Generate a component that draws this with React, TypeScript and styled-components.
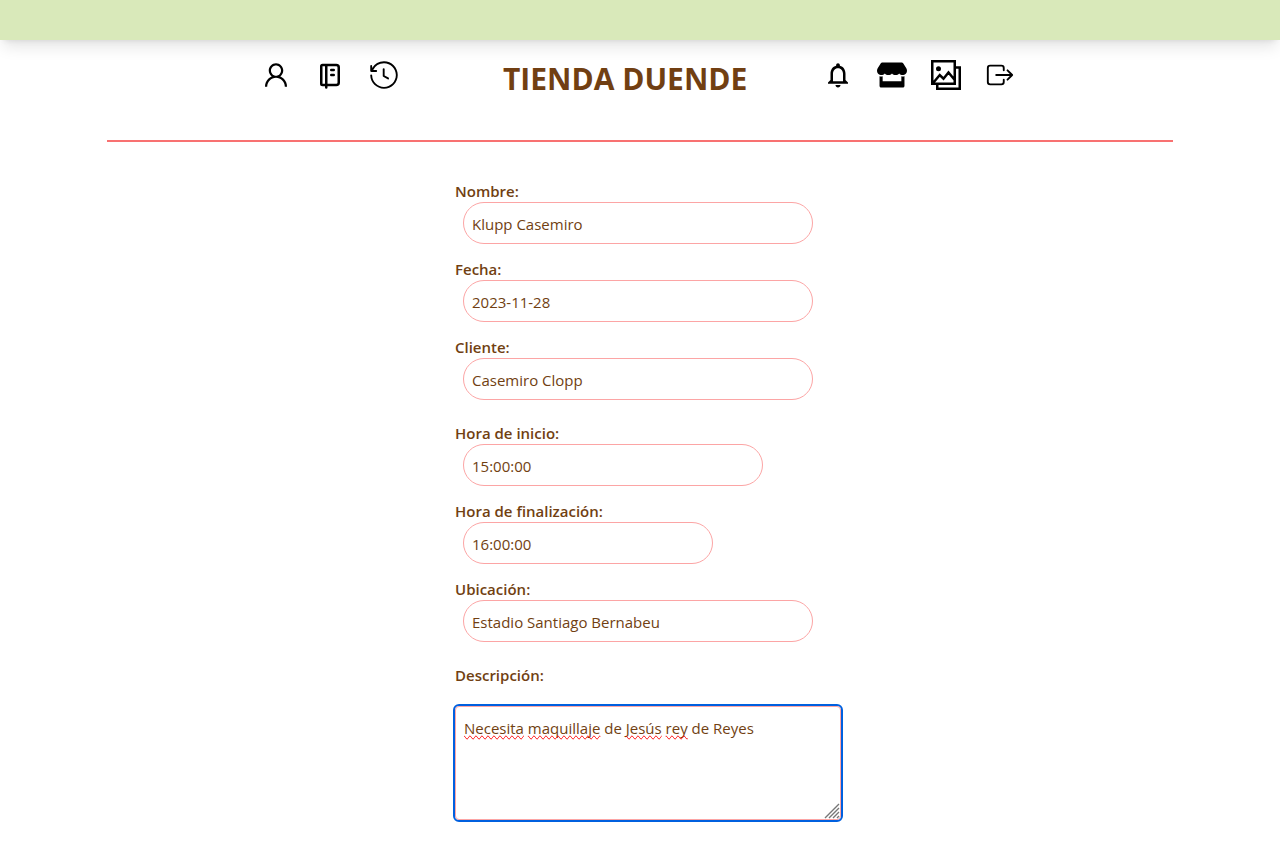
import React from "react";
import styled, { createGlobalStyle } from "styled-components";
import { GoHistory } from "react-icons/go";
import { AiOutlineUser } from "react-icons/ai";
import { TbNotebook } from "react-icons/tb";
import { MdNotificationsNone } from "react-icons/md";
import { FaStore } from "react-icons/fa";
import { GrGallery } from "react-icons/gr";
import { IoExitOutline } from "react-icons/io5";

const GlobalStyle = createGlobalStyle`
  *, *::before, *::after { box-sizing: border-box; }
  body {
    margin: 0;
    background: #ffffff;
    color: #713f12;
    font-family: "Segoe UI", "Open Sans", "Noto Sans", sans-serif;
    font-size: 15px;
    line-height: 24px;
  }
`;

const TopBar = styled.div`
  height: 40px;
  background: #d9e9ba;
  box-shadow: 0 10px 15px -3px rgba(0, 0, 0, 0.1), 0 4px 6px -4px rgba(0, 0, 0, 0.1);
`;

const Header = styled.header`
  display: flex;
  justify-content: center;
  align-items: flex-start;
  width: 83.3333%;
  height: 102px;
  margin: 0 auto;
  padding: 20px 4px 0 0;
  border-bottom: 2px solid #f87171;
`;

const IconGroup = styled.nav`
  display: flex;
  gap: 24px;
`;

const IconButton = styled.button`
  display: block;
  width: 30px;
  height: 30px;
  padding: 0;
  border: 0;
  background: none;
  color: #000000;
  cursor: pointer;

  svg {
    display: block;
    width: 30px;
    height: 30px;
  }
`;

const Title = styled.h1`
  width: 240px;
  margin: 0 80px 0 104px;
  font-size: 30px;
  line-height: 38px;
  font-weight: 700;
  white-space: nowrap;
`;

const Form = styled.form`
  display: flex;
  flex-direction: column;
  gap: 20px;
  width: 370px;
  max-width: 100%;
  margin: 36px auto 20px;
`;

const FieldGroup = styled.div`
  display: flex;
  flex-direction: column;
  gap: 12px;
`;

const Field = styled.div`
  display: flex;
  flex-direction: column;
`;

const Label = styled.label`
  padding-top: 2px;
  font-weight: 600;
  line-height: 22px;
`;

const Input = styled.input<{ $width: number }>`
  width: ${(p) => p.$width}px;
  height: 42px;
  margin: 0 8px;
  padding: 9px 8px 7px;
  border: 1px solid #fca5a5;
  border-radius: 24px;
  background: #ffffff;
  color: inherit;
  font: inherit;
`;

const NoteBox = styled.div`
  position: relative;
  width: 386px;
  margin-top: 20px;
`;

const NoteArea = styled.textarea`
  display: block;
  width: 100%;
  height: 114px;
  padding: 9px 8px 7px;
  border: 1px solid #fca5a5;
  border-radius: 4px;
  outline: 2px solid #0060df;
  background: #ffffff;
  color: inherit;
  font: inherit;
  resize: both;

  &::-webkit-resizer {
    display: none;
  }
`;

const SpellLayer = styled.div`
  position: absolute;
  inset: 0;
  padding: 10px 9px;
  color: transparent;
  pointer-events: none;
`;

const Misspelled = styled.span`
  text-decoration-line: spelling-error;
`;

const Grip = styled.svg`
  position: absolute;
  right: 1px;
  bottom: 1px;
  width: 16px;
  height: 16px;
  pointer-events: none;
`;

const note = "Necesita maquillaje de Jesús rey de Reyes";
const unknownWords = ["Necesita", "maquillaje", "Jesús", "rey"];

type FieldData = { id: string; label: string; value: string; width: number };

const groups: FieldData[][] = [
  [
    { id: "nombre", label: "Nombre:", value: "Klupp Casemiro", width: 350 },
    { id: "fecha", label: "Fecha:", value: "2023-11-28", width: 350 },
    { id: "cliente", label: "Cliente:", value: "Casemiro Clopp", width: 350 },
  ],
  [
    { id: "inicio", label: "Hora de inicio:", value: "15:00:00", width: 300 },
    { id: "fin", label: "Hora de finalización:", value: "16:00:00", width: 250 },
    { id: "ubicacion", label: "Ubicación:", value: "Estadio Santiago Bernabeu", width: 350 },
  ],
];

export default function App() {
  return (
    <>
      <GlobalStyle />
      <TopBar />
      <Header>
        <IconGroup>
          <IconButton aria-label="Perfil"><AiOutlineUser /></IconButton>
          <IconButton aria-label="Agenda"><TbNotebook /></IconButton>
          <IconButton aria-label="Historial"><GoHistory /></IconButton>
        </IconGroup>
        <Title>TIENDA DUENDE</Title>
        <IconGroup>
          <IconButton aria-label="Notificaciones"><MdNotificationsNone /></IconButton>
          <IconButton aria-label="Tienda"><FaStore /></IconButton>
          <IconButton aria-label="Galería"><GrGallery /></IconButton>
          <IconButton aria-label="Salir"><IoExitOutline /></IconButton>
        </IconGroup>
      </Header>
      <Form>
        {groups.map((fields) => (
          <FieldGroup key={fields[0].id}>
            {fields.map((f) => (
              <Field key={f.id}>
                <Label htmlFor={f.id}>{f.label}</Label>
                <Input id={f.id} type="text" defaultValue={f.value} $width={f.width} />
              </Field>
            ))}
          </FieldGroup>
        ))}
        <Field>
          <Label htmlFor="descripcion">Descripción:</Label>
          <NoteBox>
            <NoteArea id="descripcion" defaultValue={note} spellCheck={false} />
            <SpellLayer aria-hidden="true">
              {note.split(" ").map((word, i) => (
                <React.Fragment key={i}>
                  {i > 0 && " "}
                  {unknownWords.includes(word) ? <Misspelled>{word}</Misspelled> : word}
                </React.Fragment>
              ))}
            </SpellLayer>
            <Grip viewBox="0 0 16 16" aria-hidden="true">
              <path
                d="M1 15L15 1M5 15L15 5M9 15L15 9M13 15L15 13"
                fill="none"
                stroke="#777777"
                strokeWidth="1.4"
              />
            </Grip>
          </NoteBox>
        </Field>
      </Form>
    </>
  );
}
